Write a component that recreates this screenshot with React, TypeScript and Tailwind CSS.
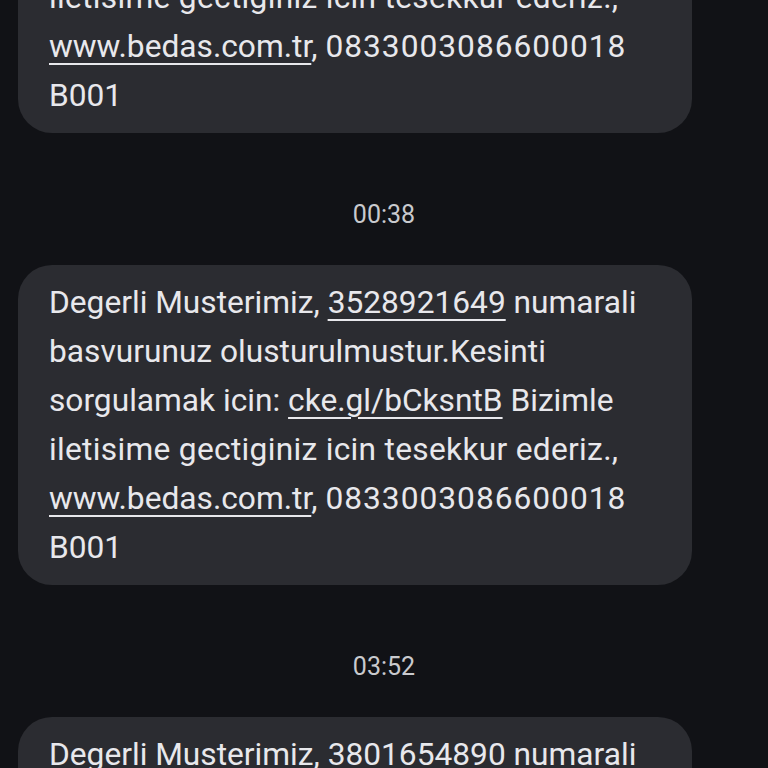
const lines = (num: string, link: string) => [
  [<>Degerli Musterimiz, </>, <u key="n">{num}</u>, <> numarali</>],
  [<>basvurunuz olusturulmustur.Kesinti</>],
  [<>sorgulamak icin: </>, <u key="l">{link}</u>, <> Bizimle</>],
  [<span key="t" className="tracking-[0.3px]">iletisime gectiginiz icin tesekkur ederiz.,</span>],
  [<u key="w">www.bedas.com.tr</u>, <>, </>, <span key="d" className="tracking-[1px]">0833003086600018</span>],
  [<>B001</>],
];

function Bubble({ num, link }: { num: string; link: string }) {
  return (
    <div className="ml-[18px] w-[674px] rounded-[34px] bg-[#2b2c31] px-[31px] py-[13px] text-[31.7px] leading-[49px] text-[#e8e8ec]">
      {lines(num, link).map((parts, i) => (
        <div key={i} className="whitespace-nowrap [&_u]:decoration-2 [&_u]:underline-offset-[6px]">
          {parts}
        </div>
      ))}
    </div>
  );
}

function Stamp({ time }: { time: string }) {
  return (
    <div className="flex h-[132px] items-start justify-center pt-[66px] text-[25px] leading-[32px] text-[#c9cace]">
      {time}
    </div>
  );
}

export default function App() {
  return (
    <div className="h-[768px] w-[768px] overflow-hidden bg-[#111216]" style={{ fontFamily: "Roboto, 'Noto Sans', sans-serif" }}>
      <div className="-mt-[187px]">
        <Bubble num="3528921640" link="cke.gl/bCksntB" />
        <Stamp time="00:38" />
        <Bubble num="3528921649" link="cke.gl/bCksntB" />
        <Stamp time="03:52" />
        <Bubble num="3801654890" link="cke.gl/bCksntB" />
      </div>
    </div>
  );
}
